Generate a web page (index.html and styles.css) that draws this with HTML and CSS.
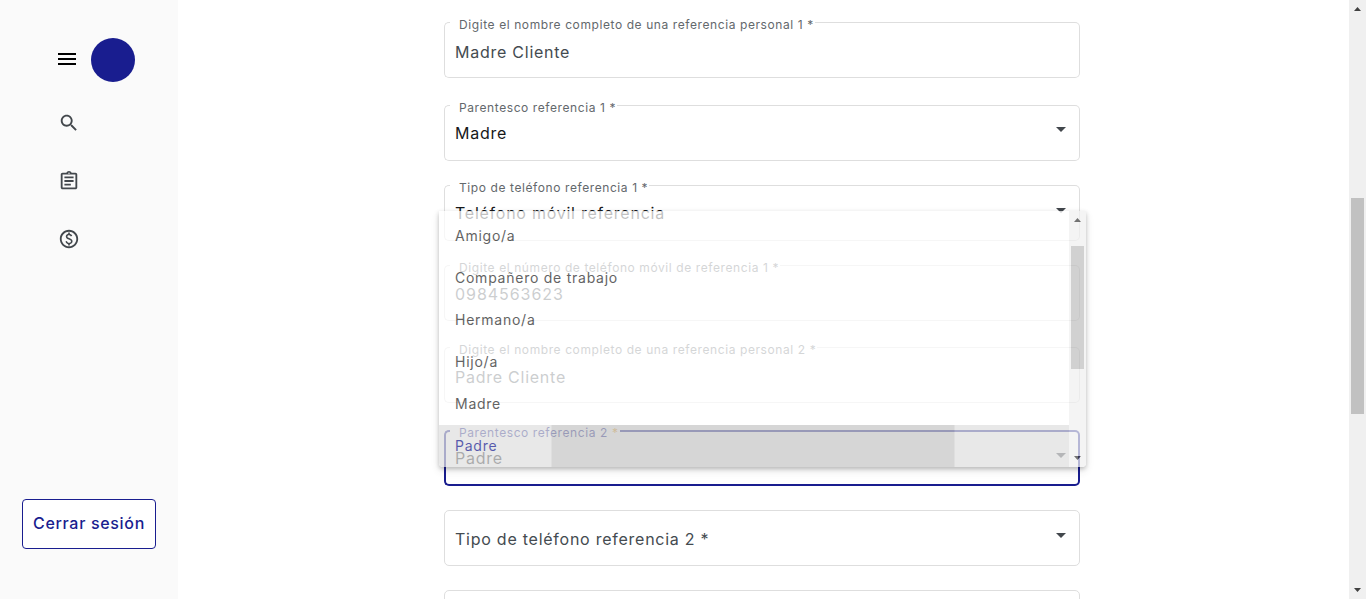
FILE: index.html
```html
<!DOCTYPE html>
<html lang="es">
<head>
<meta charset="utf-8">
<title>Referencias</title>
<link rel="stylesheet" href="styles.css">
</head>
<body>
<div class="app">
  <aside class="sidebar">
    <div class="brand">
      <svg class="burger" viewBox="0 0 18 12"><path d="M0 0h18v2H0zM0 5h18v2H0zM0 10h18v2H0z"/></svg>
      <span class="avatar"></span>
    </div>
    <nav class="nav">
      <svg class="icon" viewBox="0 0 24 24"><path d="M15.5 14h-.79l-.28-.27C15.41 12.59 16 11.11 16 9.5 16 5.91 13.09 3 9.5 3S3 5.91 3 9.5 5.91 16 9.5 16c1.61 0 3.09-.59 4.23-1.57l.27.28v.79l5 4.99L20.49 19l-4.99-5zm-6 0C7.01 14 5 11.99 5 9.5S7.01 5 9.5 5 14 7.01 14 9.5 11.99 14 9.5 14z"/></svg>
      <svg class="icon" viewBox="0 0 24 24"><path d="M7 15h7v2H7zm0-4h10v2H7zm0-4h10v2H7zm12-4h-4.18C14.4 1.84 13.3 1 12 1c-1.3 0-2.4.84-2.82 2H5c-1.1 0-2 .9-2 2v14c0 1.1.9 2 2 2h14c1.1 0 2-.9 2-2V5c0-1.1-.9-2-2-2zm-7-.25c.41 0 .75.34.75.75s-.34.75-.75.75-.75-.34-.75-.75.34-.75.75-.75zM19 19H5V5h14v14z"/></svg>
      <svg class="icon" viewBox="0 0 24 24"><path d="M12 2C6.48 2 2 6.48 2 12s4.480 10 10 10 10-4.480 10-10S17.520 2 12 2zm0 18c-4.410 0-8-3.590-8-8s3.590-8 8-8 8 3.590 8 8-3.590 8-8 8zm.89-8.900c-1.780-.59-2.640-.96-2.640-1.900 0-1.020 1.110-1.390 1.810-1.390 1.310 0 1.790.99 1.900 1.340l1.580-.67c-.15-.44-.82-1.910-2.660-2.230V5h-1.750v1.260c-2.600.56-2.620 2.850-2.620 2.960 0 2.270 2.250 2.910 3.350 3.310 1.580.56 2.280 1.070 2.280 2.030 0 1.130-1.050 1.610-1.980 1.610-1.820 0-2.340-1.870-2.400-2.090l-1.660.67c.63 2.190 2.280 2.780 3.020 2.960V19h1.750v-1.240c.52-.09 3.020-.59 3.020-3.220.01-1.390-.6-2.610-3-3.440z"/></svg>
    </nav>
    <button class="logout">Cerrar sesión</button>
  </aside>
  <main class="content">
    <form class="form">
      <div class="field gap-a">
        <div class="outline"><i class="edge-start"></i><span class="notch"><span class="label">Digite el nombre completo de una referencia personal 1 *</span></span><i class="edge-end"></i></div>
        <div class="body"><span class="value">Madre Cliente</span></div>
      </div>
      <div class="field select gap-b">
        <div class="outline"><i class="edge-start"></i><span class="notch"><span class="label">Parentesco referencia 1 *</span></span><i class="edge-end"></i></div>
        <div class="body"><span class="value dark">Madre</span><i class="arrow"></i></div>
      </div>
      <div class="field select gap-b">
        <div class="outline"><i class="edge-start"></i><span class="notch"><span class="label">Tipo de teléfono referencia 1 *</span></span><i class="edge-end"></i></div>
        <div class="body"><span class="value dark">Teléfono móvil referencia</span><i class="arrow low"></i></div>
      </div>
      <div class="field numeric gap-c">
        <div class="outline"><i class="edge-start"></i><span class="notch"><span class="label">Digite el número de teléfono móvil de referencia 1 *</span></span><i class="edge-end"></i></div>
        <div class="body"><span class="value">0984563623</span></div>
      </div>
      <div class="field gap-a">
        <div class="outline"><i class="edge-start"></i><span class="notch"><span class="label">Digite el nombre completo de una referencia personal 2 *</span></span><i class="edge-end"></i></div>
        <div class="body"><span class="value">Padre Cliente</span></div>
      </div>
      <div class="field select focused gap-b">
        <div class="outline"><i class="edge-start"></i><span class="notch"><span class="label">Parentesco referencia 2 <span class="required">*</span></span></span><i class="edge-end"></i></div>
        <div class="body"><span class="value dark">Padre</span><i class="arrow low"></i></div>
      </div>
      <div class="field select empty gap-b">
        <div class="outline plain"></div>
        <div class="body"><span class="value">Tipo de teléfono referencia 2 *</span><i class="arrow"></i></div>
      </div>
      <div class="field">
        <div class="outline plain"></div>
      </div>
    </form>
    <div class="panel">
      <ul class="options">
        <li>Amigo/a</li>
        <li>Compañero de trabajo</li>
        <li>Hermano/a</li>
        <li>Hijo/a</li>
        <li>Madre</li>
        <li class="selected">Padre</li>
      </ul>
      <div class="panel-scroll"><i class="up"></i><i class="panel-thumb"></i><i class="down"></i></div>
    </div>
  </main>
  <div class="page-scroll"><i class="up"></i><i class="page-thumb"></i><i class="down"></i></div>
</div>
</body>
</html>
```
FILE: styles.css
```css
* { box-sizing: border-box; }
body {
  margin: 0;
  background: #fff;
  color: #444b50;
  font-family: Inter, "Liberation Sans", sans-serif;
  font-size: 16px;
  letter-spacing: .75px;
}
.app {
  display: flex;
  width: 1366px;
  height: 599px;
  overflow: hidden;
}

/* Sidebar */
.sidebar {
  display: flex;
  flex-direction: column;
  width: 178px;
  padding: 38px 22px 50px;
  background: #fafafa;
}
.brand {
  display: flex;
  align-items: center;
  gap: 15px;
  padding-left: 36px;
}
.burger { width: 18px; height: 12px; margin-top: -2px; }
.avatar {
  width: 44px;
  height: 44px;
  border-radius: 50%;
  background: #191d8f;
}
.nav {
  display: flex;
  flex-direction: column;
  gap: 36px;
  padding: 30px 0 0 36px;
}
.icon { width: 22px; height: 22px; fill: #42474c; }
.logout {
  height: 50px;
  margin-top: auto;
  padding: 0 0 2px;
  border: 1px solid #191d8f;
  border-radius: 4px;
  background: #fff;
  color: #191d8f;
  font: 500 16px Inter, "Liberation Sans", sans-serif;
  letter-spacing: .68px;
  white-space: nowrap;
}

/* Form fields */
.content {
  position: relative;
  flex: 1;
  padding: 22px 269px 0 266px;
}
.form { display: flex; flex-direction: column; }
.field {
  display: grid;
  flex: none;
  height: 56px;
}
.gap-a { margin-bottom: 27px; }
.gap-b { margin-bottom: 24px; }
.gap-c { margin-bottom: 26px; }
.outline, .body {
  grid-area: 1 / 1;
  display: flex;
  min-width: 0;
}
.outline { --line: 1px solid #dedede; }
.focused .outline { --line: 2px solid #191d8f; }
.edge-start {
  width: 6px;
  border: var(--line);
  border-right: 0;
  border-radius: 5px 0 0 5px;
}
.notch {
  padding: 0 1px 0 9px;
  border-bottom: var(--line);
}
.edge-end {
  flex: 1;
  border: var(--line);
  border-left: 0;
  border-radius: 0 5px 5px 0;
}
.plain { border: var(--line); border-radius: 5px; }
.label {
  display: block;
  margin-top: -5px;
  color: #63686c;
  font-size: 12px;
  letter-spacing: .59px;
  line-height: 16px;
  white-space: nowrap;
}
.focused .label { color: #191d8f; }
.required { color: #e8a020; }
.body {
  justify-content: space-between;
  padding: 20px 14px 0 11px;
  line-height: 20px;
}
.select .body { padding-top: 18px; }
.empty .body { padding-top: 19px; }
.numeric .body { padding-top: 19px; }
.numeric .value { letter-spacing: .95px; }
.value { white-space: nowrap; }
.dark { color: #16181a; }
.arrow {
  width: 10px;
  height: 5px;
  margin-top: 4px;
  background: #42474c;
  clip-path: polygon(0 0, 100% 0, 50% 100%);
}
.low { margin-top: 5px; }
.empty .arrow { margin-top: 4px; }

/* Options list floating above the form */
.panel {
  position: absolute;
  top: 211px;
  left: 261px;
  display: flex;
  width: 647px;
  height: 256px;
  overflow: hidden;
  border-radius: 0 0 4px 4px;
  background: #fff;
  box-shadow: 0 2px 4px rgba(0, 0, 0, .3), 0 4px 9px rgba(0, 0, 0, .12);
  opacity: .73;
}
.options {
  flex: 1;
  margin: 0;
  padding: 4px 0 0;
  list-style: none;
  font-size: 14px;
  line-height: 42px;
}
.options li { height: 42px; padding-left: 16px; color: #2a2a2a; }
.options .selected {
  background: linear-gradient(to right, transparent 112px, rgba(0, 0, 0, .11) 113px, rgba(0, 0, 0, .11) 515px, transparent 516px), #e0e0e0;
  color: #191d8f;
}

/* Scrollbars */
.panel-scroll, .page-scroll {
  display: flex;
  flex-direction: column;
  align-items: center;
  width: 17px;
  background: #f1f1f1;
}
.panel-scroll { padding: 7px 0; }
.page-scroll { padding: 7px 0; background: #f0f0f0; }
.up, .down { width: 7px; height: 4px; background: #404040; }
.up { clip-path: polygon(50% 0, 100% 100%, 0 100%); }
.down { margin-top: auto; clip-path: polygon(0 0, 100% 0, 50% 100%); }
.panel-thumb { width: 13px; height: 123px; margin-top: 24px; background: #c1c1c1; }
.page-thumb { width: 13px; height: 216px; margin-top: 187px; background: #c1c1c1; }
```
